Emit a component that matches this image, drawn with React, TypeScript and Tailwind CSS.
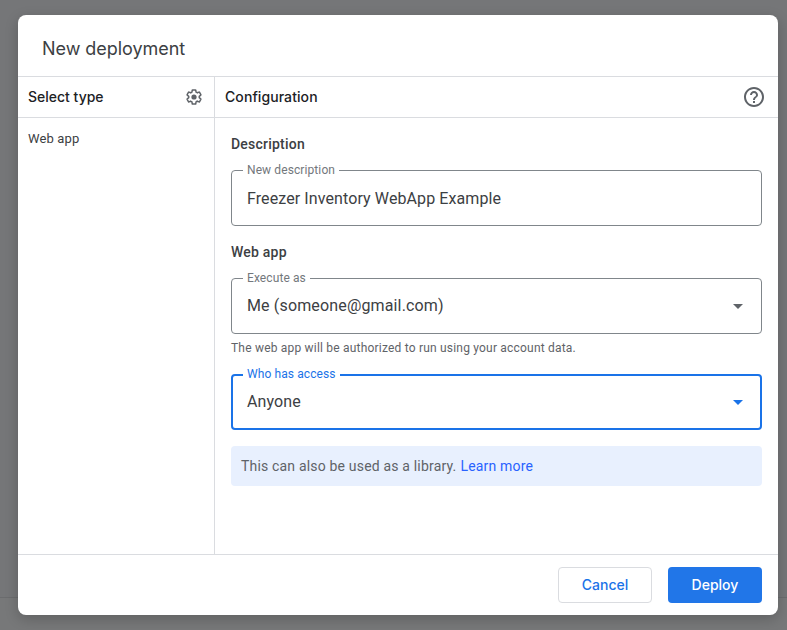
import type { ReactNode } from "react";
import { MdHelpOutline } from "react-icons/md";

const heading = "font-['Inter',sans-serif]";

function Gear() {
  return (
    <svg viewBox="-0.7 -0.7 25.4 25.4" className="size-[18px] text-[#5f6368]">
      <path
        d="M19.43 12.98c.04-.32.07-.64.07-.98 0-.34-.03-.66-.07-.98l2.11-1.65c.19-.15.24-.42.12-.64l-2-3.46a.5.5 0 0 0-.61-.22l-2.49 1c-.52-.4-1.08-.73-1.69-.98l-.38-2.65A.488.488 0 0 0 14 2h-4c-.25 0-.46.18-.49.42l-.38 2.65c-.61.25-1.17.59-1.69.98l-2.49-1a.5.5 0 0 0-.61.22l-2 3.46c-.13.22-.07.49.12.64l2.11 1.65c-.04.32-.07.65-.07.98 0 .33.03.66.07.98l-2.11 1.65c-.19.15-.24.42-.12.64l2 3.46a.5.5 0 0 0 .61.22l2.49-1c.52.4 1.08.73 1.69.98l.38 2.65c.03.24.24.42.49.42h4c.25 0 .46-.18.49-.42l.38-2.65c.61-.25 1.17-.59 1.69-.98l2.49 1c.23.09.49 0 .61-.22l2-3.46c.12-.22.07-.49-.12-.64z"
        fill="none"
        stroke="currentColor"
        strokeWidth="2.1"
      />
      <circle cx="12" cy="12" r="3.7" fill="currentColor" />
    </svg>
  );
}

function Caret({ className }: { className: string }) {
  return (
    <svg viewBox="0 0 10 5" className={`h-[5px] w-[10px] ${className}`} fill="currentColor">
      <path d="M0 0h10L5 5z" />
    </svg>
  );
}

function Field({
  label,
  active = false,
  caret,
  children,
}: {
  label: string;
  active?: boolean;
  caret?: ReactNode;
  children: ReactNode;
}) {
  return (
    <fieldset
      className={`h-[63px] min-w-0 rounded ${
        active ? "border-2 border-[#1a73e8] pr-[17px] pl-[10px]" : "border border-[#80868b] pr-[18px] pl-[11px]"
      }`}
    >
      <legend
        className={`px-1 text-xs tracking-[0.1px] whitespace-nowrap ${
          active ? "h-4 leading-[14px] text-[#1a73e8]" : "h-[15px] leading-[15px] text-[#73777c]"
        }`}
      >
        {label}
      </legend>
      <div
        className={`flex items-center justify-between pl-1 text-base text-[#3c4043] ${
          active ? "h-[38px]" : "h-[41px]"
        }`}
      >
        <span className={caret && !active ? "pb-[2px] tracking-[0.15px]" : "tracking-[0.1px]"}>{children}</span>
        {caret}
      </div>
    </fieldset>
  );
}

export default function App() {
  return (
    <div className="flex h-[630px] w-[787px] flex-col bg-[linear-gradient(#757678_597px,#6b6c6e_597px,#6b6c6e_598px,#777879_598px)] pt-[15px] pl-[18px] font-['Roboto',sans-serif]">
      <div className="flex h-[600px] w-[760px] flex-col overflow-hidden rounded-lg bg-white shadow-[0_4px_14px_rgba(0,0,0,0.2)]">
        <header className="flex h-[62px] items-center border-b border-[#dadce0] px-6 pt-[6px]">
          <h1 className={`${heading} text-lg tracking-[-0.04px] text-[#3c4043]`}>New deployment</h1>
        </header>
        <main className="flex h-[477px]">
          <aside className="w-[197px] border-r border-[#dadce0]">
            <div className="flex h-[41px] items-center justify-between border-b border-[#dadce0] pr-[11px] pl-[10px]">
              <h2 className={`${heading} text-sm font-medium text-[#202124]`}>Select type</h2>
              <Gear />
            </div>
            <div className="px-[10px] pt-[11px] text-[13px] leading-5 tracking-[0.15px] text-[#3c4043]">Web app</div>
          </aside>
          <section className="flex-1">
            <div className="flex h-[41px] items-center justify-between border-b border-[#dadce0] pr-3 pl-[10px]">
              <h2 className={`${heading} text-sm font-medium tracking-[0.08px] text-[#202124]`}>Configuration</h2>
              <MdHelpOutline className="size-6 text-[#5f6368]" />
            </div>
            <div className="flex flex-col px-4 pt-4">
              <h3 className="mb-[9px] text-sm leading-5 font-medium tracking-[0.22px] text-[#3c4043]">Description</h3>
              <Field label="New description">Freezer Inventory WebApp Example</Field>
              <h3 className="mt-4 mb-[9px] text-sm leading-5 font-medium tracking-[0.22px] text-[#3c4043]">Web app</h3>
              <Field label="Execute as" caret={<Caret className="text-[#5f6368]" />}>
                Me (someone@gmail.com)
              </Field>
              <p className="mt-[6px] mb-[11px] text-xs leading-4 tracking-[0.2px] text-[#5f6368]">
                The web app will be authorized to run using your account data.
              </p>
              <Field label="Who has access" active caret={<Caret className="text-[#1a73e8]" />}>
                Anyone
              </Field>
              <div className="mt-4 flex h-10 items-center gap-1 rounded bg-[#e8f0fe] px-[10px] text-sm tracking-[0.18px] text-[#5f6368]">
                <span>This can also be used as a library.</span>
                <a className="text-[#2962ff]">Learn more</a>
              </div>
            </div>
          </section>
        </main>
        <footer className={`${heading} flex flex-1 items-start justify-end gap-4 border-t border-[#dadce0] pt-3 pr-4 text-sm font-medium`}>
          <button className="h-9 w-[94px] rounded border border-[#dadce0] text-[#1a73e8]">Cancel</button>
          <button className="h-9 w-[94px] rounded bg-[#2176e8] text-white">Deploy</button>
        </footer>
      </div>
    </div>
  );
}
